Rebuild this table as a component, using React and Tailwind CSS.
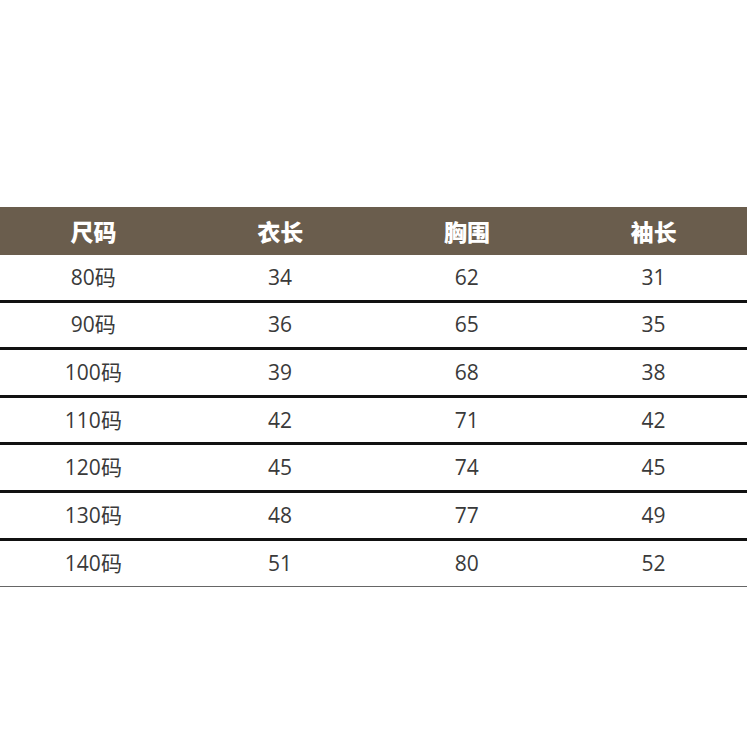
import React from "react";

const rows = [
  ["80码", "34", "62", "31"],
  ["90码", "36", "65", "35"],
  ["100码", "39", "68", "38"],
  ["110码", "42", "71", "42"],
  ["120码", "45", "74", "45"],
  ["130码", "48", "77", "49"],
  ["140码", "51", "80", "52"],
];

export default function App() {
  return (
    <div
      className="w-[750px] h-[750px] bg-white pt-[207px]"
      style={{ fontFamily: '"Noto Sans CJK SC", "Noto Sans", sans-serif' }}
    >
      <div className="w-[747px]">
        <div className="grid grid-cols-4 h-[48px] bg-[#6a5d4d] items-center text-white text-[23px] font-black">
          {["尺码", "衣长", "胸围", "袖长"].map((h) => (
            <div key={h} className="text-center leading-none">{h}</div>
          ))}
        </div>
        {rows.map((r, i) => (
          <div
            key={i}
            className={
              i < rows.length - 1
                ? "grid grid-cols-4 h-[47.6px] items-center border-b-[3px] border-[#111] text-[21px] text-[#3a3a3a]"
                : "grid grid-cols-4 h-[46px] items-center border-b border-[#666] text-[21px] text-[#3a3a3a]"
            }
            style={{ fontFamily: '"Open Sans", "Noto Sans CJK SC", sans-serif' }}
          >
            {r.map((c, j) => (
              <div key={j} className="text-center leading-none">{c}</div>
            ))}
          </div>
        ))}
      </div>
    </div>
  );
}
